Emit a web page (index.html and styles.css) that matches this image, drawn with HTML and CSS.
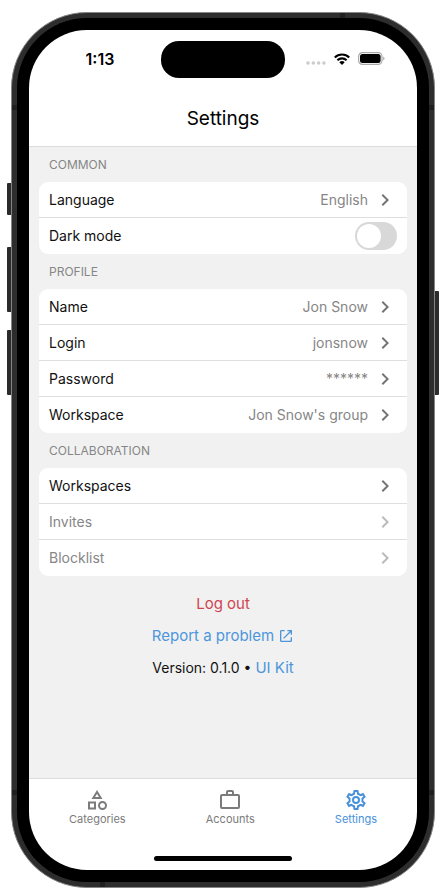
FILE: index.html
```html
<!DOCTYPE html>
<html lang="en">
<head>
<meta charset="utf-8">
<meta name="viewport" content="width=device-width, initial-scale=1">
<title>Settings</title>
<link rel="stylesheet" href="styles.css">
</head>
<body>
<svg class="sprite" aria-hidden="true">
  <symbol id="chevron" viewBox="0 0 24 24"><path d="M10 6 8.59 7.41 13.17 12l-4.58 4.59L10 18l6-6z"/></symbol>
</svg>
<div class="phone">
  <span class="side-button silent"></span>
  <span class="side-button volume-up"></span>
  <span class="side-button volume-down"></span>
  <span class="side-button power"></span>
  <span class="band band-left-top"></span>
  <span class="band band-right-top"></span>
  <span class="band band-left-bottom"></span>
  <span class="band band-right-bottom"></span>
  <span class="band band-top"></span>
  <span class="band band-bottom"></span>
  <div class="bezel">
    <div class="screen">
      <header class="header">
        <div class="status">
          <time class="clock">1:13</time>
          <span class="island"></span>
          <span class="indicators">
            <svg width="20" height="4" viewBox="0 0 20 4" class="cell" aria-hidden="true"><circle cx="2" cy="2" r="1.8"/><circle cx="7.3" cy="2" r="1.8"/><circle cx="12.6" cy="2" r="1.8"/><circle cx="17.9" cy="2" r="1.8"/></svg>
            <svg width="16" height="12" viewBox="0 0 16 12" aria-hidden="true"><g fill="none" stroke="#000" stroke-width="2.1"><path d="M.8 4.4a10.3 10.3 0 0 1 14.4 0"/><path d="M3.4 7.2a6.6 6.6 0 0 1 9.2 0"/></g><path d="M8 12 5.3 9.2a3.9 3.9 0 0 1 5.4 0z"/></svg>
            <svg width="27" height="13" viewBox="0 0 27 13" aria-hidden="true"><rect x=".6" y=".6" width="23.4" height="11.8" rx="3.8" fill="none" stroke="#aaa" stroke-width="1.2"/><rect x="2" y="2" width="20.6" height="9" rx="2.5"/><path d="M25.2 4.5a2.2 2.2 0 0 1 0 4z" fill="#aaa"/></svg>
          </span>
        </div>
        <h1 class="title">Settings</h1>
      </header>
      <main class="content">
        <section>
          <h2 class="heading">COMMON</h2>
          <div class="card">
            <button class="row"><span>Language</span><span class="value">English</span><svg class="chevron"><use href="#chevron"/></svg></button>
            <div class="row"><label for="dark">Dark mode</label><input id="dark" class="switch" type="checkbox" role="switch"></div>
          </div>
        </section>
        <section>
          <h2 class="heading">PROFILE</h2>
          <div class="card">
            <button class="row"><span>Name</span><span class="value">Jon Snow</span><svg class="chevron"><use href="#chevron"/></svg></button>
            <button class="row"><span>Login</span><span class="value">jonsnow</span><svg class="chevron"><use href="#chevron"/></svg></button>
            <button class="row"><span>Password</span><span class="value">******</span><svg class="chevron"><use href="#chevron"/></svg></button>
            <button class="row"><span>Workspace</span><span class="value">Jon Snow's group</span><svg class="chevron"><use href="#chevron"/></svg></button>
          </div>
        </section>
        <section>
          <h2 class="heading">COLLABORATION</h2>
          <div class="card">
            <button class="row"><span>Workspaces</span><svg class="chevron"><use href="#chevron"/></svg></button>
            <button class="row" disabled><span>Invites</span><svg class="chevron"><use href="#chevron"/></svg></button>
            <button class="row" disabled><span>Blocklist</span><svg class="chevron"><use href="#chevron"/></svg></button>
          </div>
        </section>
        <div class="actions">
          <button class="logout">Log out</button>
          <a class="link" href="#report">Report a problem <svg width="16" height="16" viewBox="0 0 24 24" fill="currentColor" aria-hidden="true"><path d="M14 3v2h3.59l-9.83 9.83 1.41 1.41L19 6.41V10h2V3m-2 16H5V5h5V3H5a2 2 0 0 0-2 2v14a2 2 0 0 0 2 2h14a2 2 0 0 0 2-2v-5h-2z"/></svg></a>
          <p class="version">Version: 0.1.0 • <a class="link" href="#kit">UI Kit</a></p>
        </div>
      </main>
      <nav class="tabs">
        <a class="tab" href="#categories"><svg width="24" height="24" viewBox="0 0 24 24" fill="none" stroke="currentColor" stroke-width="2" aria-hidden="true"><path d="M12 4 8.3 10h7.4z"/><path d="M4 14.5h6v6H4z"/><circle cx="17.5" cy="17.5" r="3.5"/></svg>Categories</a>
        <a class="tab" href="#accounts"><svg width="24" height="24" viewBox="0 0 24 24" fill="none" stroke="currentColor" stroke-width="2" aria-hidden="true"><rect x="3" y="7" width="18" height="13" rx="1"/><path d="M9 7V4a1 1 0 0 1 1-1h4a1 1 0 0 1 1 1v3"/></svg>Accounts</a>
        <a class="tab current" href="#settings" aria-current="page"><svg width="24" height="24" viewBox="0 0 24 24" fill="currentColor" aria-hidden="true"><path d="M19.43 12.98c.04-.32.07-.64.07-.98s-.03-.66-.07-.98l2.11-1.65c.19-.15.24-.42.12-.64l-2-3.46a.5.5 0 0 0-.61-.22l-2.49 1c-.52-.4-1.08-.73-1.69-.98l-.38-2.65A.488.488 0 0 0 14 2h-4c-.25 0-.46.18-.49.42l-.38 2.65c-.61.25-1.17.59-1.69.98l-2.49-1a.5.5 0 0 0-.61.22l-2 3.46c-.13.22-.07.49.12.64l2.11 1.65c-.04.32-.07.65-.07.98s.03.66.07.98l-2.11 1.65c-.19.15-.24.42-.12.64l2 3.46c.12.22.39.3.61.22l2.49-1c.52.4 1.08.73 1.69.98l.38 2.65c.03.24.24.42.49.42h4c.25 0 .46-.18.49-.42l.38-2.65c.61-.25 1.17-.59 1.69-.98l2.49 1c.23.09.49 0 .61-.22l2-3.46c.12-.22.07-.49-.12-.64zm-1.98-1.71c.04.31.05.52.05.73s-.02.43-.05.73l-.14 1.13.89.7 1.08.84-.7 1.21-1.27-.51-1.04-.42-.9.68c-.43.32-.84.56-1.25.73l-1.06.43-.16 1.13-.2 1.35h-1.4l-.19-1.35-.16-1.13-1.06-.43c-.43-.18-.83-.41-1.23-.71l-.91-.7-1.06.43-1.27.51-.7-1.21 1.08-.84.89-.7-.14-1.13c-.03-.31-.05-.54-.05-.74s.02-.43.05-.73l.14-1.13-.89-.7-1.08-.84.7-1.21 1.27.51 1.04.42.9-.68c.43-.32.84-.56 1.25-.73l1.06-.43.16-1.13.2-1.35h1.39l.19 1.35.16 1.13 1.06.43c.43.18.83.41 1.23.71l.91.7 1.06-.43 1.27-.51.7 1.21-1.07.85-.89.7zM12 8a4 4 0 1 0 0 8 4 4 0 0 0 0-8zm0 6a2 2 0 1 1 0-4 2 2 0 0 1 0 4z"/></svg>Settings</a>
      </nav>
      <div class="home"><span class="home-bar"></span></div>
    </div>
  </div>
</div>
</body>
</html>
```
FILE: styles.css
```css
* {
  box-sizing: border-box;
}

body {
  display: flex;
  min-height: 100vh;
  margin: 0;
  padding: 12px 11px 2px;
  background: #fff;
  color: #111;
  font: 14px/20px Inter, "Liberation Sans", sans-serif;
}

.sprite {
  position: absolute;
  width: 0;
  height: 0;
}

h1, h2, p {
  margin: 0;
  font-weight: 400;
}

button {
  padding: 0;
  border: 0;
  background: none;
  color: inherit;
  font: inherit;
}

a {
  color: inherit;
  text-decoration: none;
}

.phone {
  position: relative;
  display: flex;
  flex: 1;
  padding: 5px;
  border: 1px solid #858585;
  border-radius: 76px;
  background: #2d2d2d;
}

.bezel {
  display: flex;
  flex: 1;
  padding: 12px;
  border-radius: 70px;
  background: #000;
}

.screen {
  display: flex;
  flex: 1;
  flex-direction: column;
  overflow: hidden;
  border-radius: 58px;
  background: #fff;
}

.side-button {
  position: absolute;
  left: -5px;
  width: 4px;
  background: #2b2b2b;
  border-radius: 1px 0 0 1px;
}

.silent { top: 170px; height: 32px; }
.volume-up { top: 234px; height: 65px; }
.volume-down { top: 317px; height: 65px; }

.power {
  top: 278px;
  right: -5px;
  left: auto;
  height: 104px;
  border-radius: 0 1px 1px 0;
}

.band {
  position: absolute;
  width: 5px;
  height: 5px;
  background: #1f1f1f;
}

.band-left-top { top: 92px; left: 0; }
.band-right-top { top: 92px; right: 0; }
.band-left-bottom { bottom: 92px; left: 0; }
.band-right-bottom { bottom: 92px; right: 0; }
.band-top { top: 0; right: 89px; }
.band-bottom { bottom: 0; left: 88px; }

.header {
  border-bottom: 1px solid #dcdcdc;
  text-align: center;
}

.status {
  display: grid;
  grid-template-columns: 1fr 124px 1fr;
  align-items: center;
  padding-top: 11px;
}

.clock {
  padding: 0 0 2px 10px;
  color: #000;
  font-size: 16px;
  font-weight: 600;
}

.island {
  height: 37px;
  border-radius: 18px;
  background: #000;
}

.indicators {
  display: flex;
  align-items: center;
  justify-content: flex-end;
  gap: 8px;
  padding: 0 32px 2px 0;
}

.cell {
  align-self: flex-end;
  fill: #ccc;
}

.title {
  padding: 29px 0 15px;
  color: #000;
  font-size: 19px;
  line-height: 24px;
}

.content {
  flex: 1;
  padding: 0 10px 20px;
  background: #f1f1f1;
}

.heading {
  padding: 0 10px;
  color: #868686;
  font-size: 12px;
  line-height: 35px;
}

.card {
  overflow: hidden;
  border-radius: 9px;
  background: #fff;
}

.row {
  display: flex;
  align-items: center;
  width: 100%;
  height: 36px;
  padding: 0 10px;
}

.row:not(:last-child) {
  border-bottom: 1px solid #dedede;
}

.row:disabled {
  color: #868686;
}

.value {
  margin-left: auto;
  color: #868686;
}

.chevron {
  width: 24px;
  height: 24px;
  margin-left: auto;
  fill: #757575;
}

.value + .chevron {
  margin-left: 5px;
}

.row:disabled .chevron {
  fill: #bababa;
}

.switch {
  width: 42px;
  height: 28px;
  margin: 0 0 0 auto;
  padding: 2px;
  border-radius: 14px;
  background: #d8d8d8;
  appearance: none;
}

.switch::before {
  display: block;
  width: 24px;
  height: 24px;
  border-radius: 50%;
  background: #fff;
  content: "";
}

.switch:checked {
  padding-left: 16px;
  background: #5299dc;
}

.actions {
  display: flex;
  flex-direction: column;
  align-items: center;
  gap: 12px;
  padding-top: 18px;
}

.logout {
  color: #d0444f;
  font-size: 15px;
}

.link {
  display: flex;
  align-items: center;
  gap: 4px;
  color: #4d96dc;
  font-size: 15px;
}

.version {
  display: flex;
  gap: 4px;
}

.tabs {
  display: flex;
  justify-content: space-around;
  padding-top: 9px;
  border-top: 1px solid #dcdcdc;
}

.tab {
  display: flex;
  flex-direction: column;
  align-items: center;
  gap: 1px;
  color: #7b7b7b;
  font-size: 11px;
  line-height: 13px;
}

.current {
  color: #4690dc;
}

.home {
  display: flex;
  justify-content: center;
  padding: 30px 0 9px;
}

.home-bar {
  width: 138px;
  height: 5px;
  border-radius: 3px;
  background: #000;
}
```
